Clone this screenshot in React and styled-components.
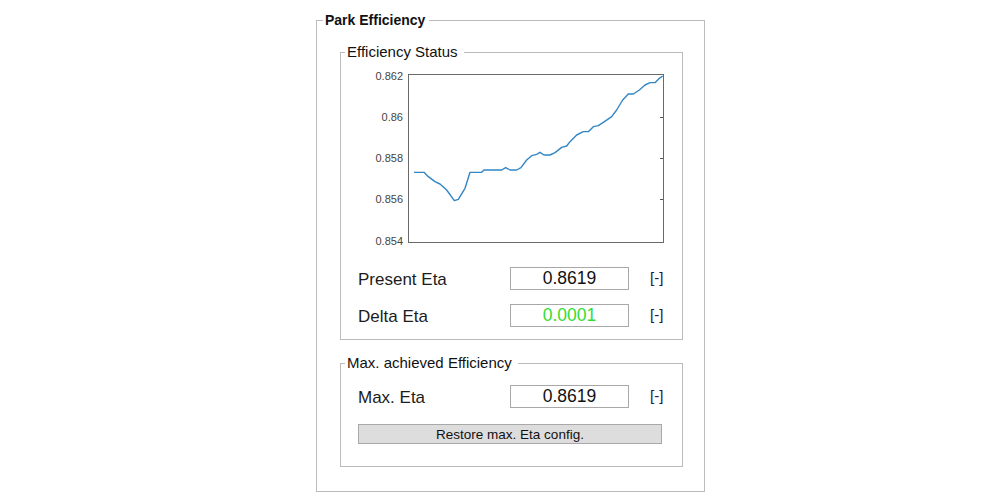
import React from "react";
import styled, { createGlobalStyle } from "styled-components";

const GlobalStyle = createGlobalStyle`
  body {
    margin: 0;
    background: #ffffff;
    font-family: "Liberation Sans", Arial, sans-serif;
    color: #1e1e1e;
  }
`;

const Page = styled.div`
  padding: 12px 0 0 316px;
`;

const Group = styled.fieldset`
  box-sizing: border-box;
  margin: 0;
  padding: 0;
  min-inline-size: 0;
  width: ${(p) => p.$width}px;
  border: 1px solid #bcbcbc;
`;

const Legend = styled.legend`
  margin-left: ${(p) => p.$indent}px;
  padding: 0 ${(p) => p.$after}px 0 2px;
  font-size: ${(p) => (p.$bold ? 14 : 15)}px;
  font-weight: ${(p) => (p.$bold ? 700 : 400)};
  line-height: 16px;
  color: #111;
`;

const OuterBody = styled.div`
  display: flex;
  flex-direction: column;
  gap: 15px;
  padding: 16px 22px 24px 23px;
`;

const StatusBody = styled.div`
  padding: 6px 0 12px 17px;
`;

const MaxBody = styled.div`
  display: flex;
  flex-direction: column;
  gap: 16px;
  padding: 14px 0 22px 17px;
`;

const Chart = styled.svg`
  display: block;
  margin-left: -17px;
  margin-bottom: 19px;
`;

const Rows = styled.div`
  display: flex;
  flex-direction: column;
  gap: 14px;
`;

const Row = styled.div`
  display: grid;
  grid-template-columns: 152px 119px 21px auto;
  align-items: center;
  height: 23px;
`;

const Label = styled.span`
  font-size: 17px;
  color: #1c1c1c;
  padding-top: 3px;
`;

const Field = styled.div`
  grid-column: 2;
  box-sizing: border-box;
  height: 23px;
  border: 1px solid #a8a8a8;
  background: #fff;
  display: flex;
  align-items: center;
  justify-content: center;
  font-size: 17.5px;
  color: ${(p) => p.$color || "#111"};
`;

const Unit = styled.span`
  grid-column: 4;
  font-size: 15px;
  color: #1a1a40;
  margin-top: -2px;
`;

const RestoreButton = styled.button`
  box-sizing: border-box;
  width: 304px;
  height: 20px;
  padding: 0;
  border: 1px solid #a9a9a9;
  background: #dddddd;
  font-family: "Liberation Sans", Arial, sans-serif;
  font-size: 13.5px;
  color: #111;
`;

// trace of the efficiency curve, in 3x zoom coordinates of the plot
const trace = [
  [222, 337], [252, 337], [265, 350], [285, 365], [300, 372], [320, 390],
  [343, 422], [355, 418], [375, 385], [390, 337], [425, 337], [432, 330],
  [485, 330], [497, 323], [510, 330], [530, 330], [543, 323], [560, 300],
  [575, 287], [590, 283], [600, 277], [612, 285], [630, 285], [645, 278],
  [665, 262], [680, 258], [690, 245], [710, 225], [730, 215], [745, 215],
  [760, 200], [775, 197], [790, 187], [815, 170], [830, 150], [848, 120],
  [865, 102], [880, 102], [898, 90], [915, 75], [930, 68], [945, 68],
  [958, 55], [968, 48],
];

const ticks = [
  { label: "0.862", y: 10 },
  { label: "0.86", y: 51 },
  { label: "0.858", y: 92 },
  { label: "0.856", y: 133 },
  { label: "0.854", y: 175 },
];

const EfficiencyChart = () => {
  const points = trace.map(([x, y]) => `${x / 3 - 1},${y / 3 - 6}`).join(" ");
  return (
    <Chart width="340" height="182" viewBox="0 0 340 182">
      {ticks.map((t) => (
        <text
          key={t.label}
          x="62"
          y={t.y}
          textAnchor="end"
          dominantBaseline="central"
          fontFamily="Liberation Sans, Arial, sans-serif"
          fontSize="11"
          fill="#444"
        >
          {t.label}
        </text>
      ))}
      <rect x="67.5" y="8.5" width="255" height="168" fill="#fff" stroke="#6a6a6a" />
      {ticks.slice(1, 4).map((t) => (
        <line key={t.label} x1="319" x2="322" y1={t.y + 0.5} y2={t.y + 0.5} stroke="#555" />
      ))}
      <polyline points={points} fill="none" stroke="#3286c4" strokeWidth="1.4" strokeLinejoin="round" />
    </Chart>
  );
};

const App = () => (
  <>
    <GlobalStyle />
    <Page>
      <Group $width={389}>
        <Legend $bold $indent={6} $after={4}>Park Efficiency</Legend>
        <OuterBody>
          <Group $width={343}>
            <Legend $indent={4} $after={6}>Efficiency Status</Legend>
            <StatusBody>
              <EfficiencyChart />
              <Rows>
                <Row>
                  <Label>Present Eta</Label>
                  <Field>0.8619</Field>
                  <Unit>[-]</Unit>
                </Row>
                <Row>
                  <Label>Delta Eta</Label>
                  <Field $color="#33dd33">0.0001</Field>
                  <Unit>[-]</Unit>
                </Row>
              </Rows>
            </StatusBody>
          </Group>
          <Group $width={343}>
            <Legend $indent={4} $after={6}>Max. achieved Efficiency</Legend>
            <MaxBody>
              <Row>
                <Label>Max. Eta</Label>
                <Field>0.8619</Field>
                <Unit>[-]</Unit>
              </Row>
              <RestoreButton type="button">Restore max. Eta config.</RestoreButton>
            </MaxBody>
          </Group>
        </OuterBody>
      </Group>
    </Page>
  </>
);

export default App;
